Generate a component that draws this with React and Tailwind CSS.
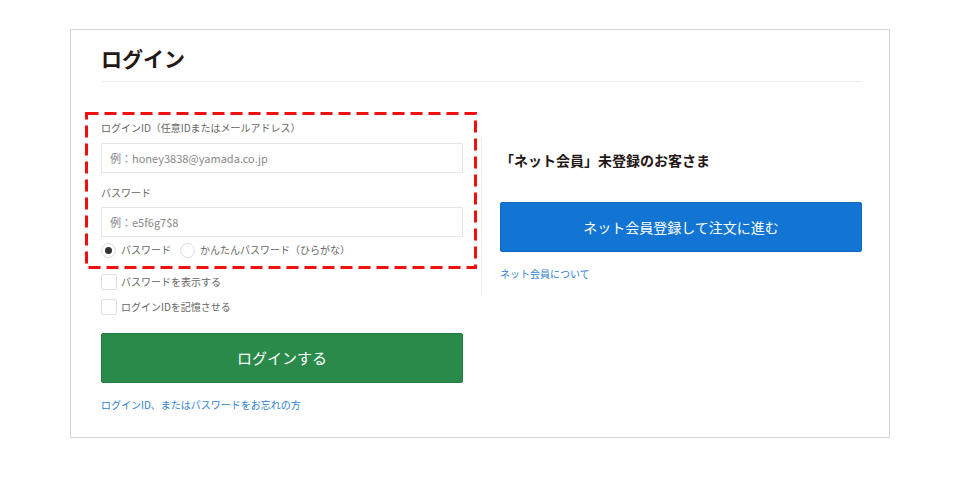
export default function App() {
  return (
    <div
      className="min-h-[497px] bg-white pt-[29px]"
      style={{ fontFamily: '"Noto Sans CJK JP", "Noto Sans", sans-serif' }}
    >
      <div className="relative mx-auto h-[409px] w-[820px] border border-[#d4d4d4] pl-[30px] pr-[27px]">
        <h1 className="border-b border-[#ececec] pt-[13px] pb-[8px] text-[21px] font-bold leading-[30px] text-[#231815]">
          ログイン
        </h1>
        <div className="flex">
          <div className="w-[362px] pt-[38px]">
            <label className="block text-[10px] leading-[16px] text-[#666]">
              ログインID（任意IDまたはメールアドレス）
            </label>
            <input
              className="mt-[7px] block h-[30px] w-full border border-[#e6e6e6] px-[8px] text-[11px] text-[#333] placeholder:text-[#888] outline-none"
              placeholder="例：honey3838@yamada.co.jp"
            />
            <label className="mt-[12px] block text-[10px] leading-[16px] text-[#666]">
              パスワード
            </label>
            <input
              className="mt-[6px] block h-[30px] w-full border border-[#e6e6e6] px-[8px] text-[11px] text-[#333] placeholder:text-[#888] outline-none"
              placeholder="例：e5f6g7$8"
            />
            <div className="mt-[5px] flex h-[16px] items-center text-[10px] leading-[16px] text-[#666]">
              <span className="flex h-[15px] w-[15px] items-center justify-center rounded-full border border-[#dcdcdc] bg-white">
                <span className="h-[7px] w-[7px] rounded-full bg-[#333]" />
              </span>
              <span className="ml-[5px]">パスワード</span>
              <span className="ml-[9px] h-[15px] w-[15px] rounded-full border border-[#dcdcdc] bg-white" />
              <span className="ml-[5px]">かんたんパスワード（ひらがな）</span>
            </div>
            <div className="mt-[16px] flex h-[16px] items-center text-[10px] leading-[16px] text-[#666]">
              <span className="h-[16px] w-[16px] rounded-[2px] border border-[#e0e0e0] bg-white" />
              <span className="ml-[4px]">パスワードを表示する</span>
            </div>
            <div className="mt-[9px] flex h-[16px] items-center text-[10px] leading-[16px] text-[#666]">
              <span className="h-[16px] w-[16px] rounded-[2px] border border-[#e0e0e0] bg-white" />
              <span className="ml-[4px]">ログインIDを記憶させる</span>
            </div>
            <button className="mt-[18px] flex h-[50px] w-full items-center justify-center rounded-[2px] border border-[#257a41] bg-[#2a8a4a] text-[15px] text-white">
              ログインする
            </button>
            <a className="mt-[14px] block text-[10px] leading-[16px] text-[#2f7fd3]">
              ログインID、またはパスワードをお忘れの方
            </a>
          </div>
          <div className="flex w-[37px] justify-center pt-[56px]">
            <div className="h-[157px] w-px bg-[#ececec]" />
          </div>
          <div className="flex-1 pt-[68px]">
            <h2 className="text-[14px] font-bold leading-[20px] text-[#231815]">
              「ネット会員」未登録のお客さま
            </h2>
            <button className="mt-[32px] flex h-[50px] w-full items-center justify-center rounded-[2px] border border-[#0f69c2] bg-[#1275d3] text-[14px] text-white">
              ネット会員登録して注文に進む
            </button>
            <a className="mt-[14px] block text-[10px] leading-[16px] text-[#2f7fd3]">
              ネット会員について
            </a>
          </div>
        </div>
        <svg
          className="pointer-events-none absolute left-[14px] top-[82px]"
          width="392"
          height="157"
          viewBox="0 0 392 157"
        >
          <rect
            x="1.5"
            y="1.5"
            width="389"
            height="154"
            fill="none"
            stroke="#f01010"
            strokeWidth="3"
            strokeDasharray="12 6"
          />
        </svg>
      </div>
    </div>
  );
}
